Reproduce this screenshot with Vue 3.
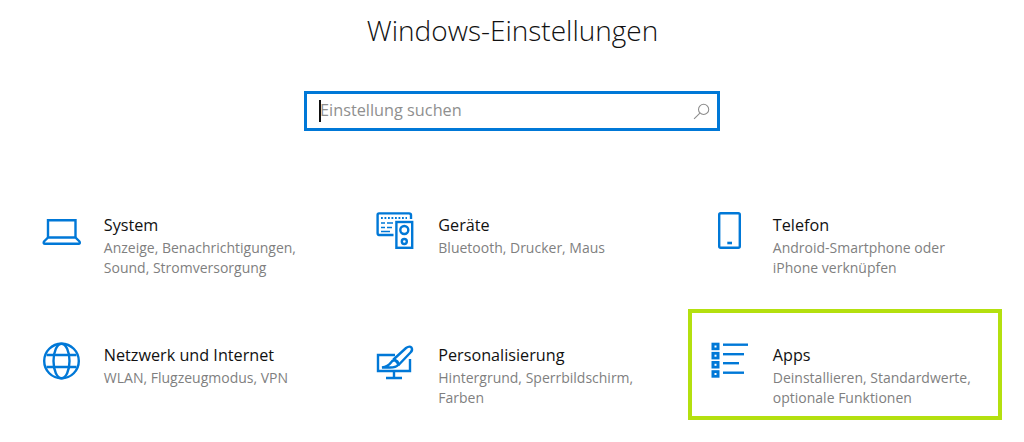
<template>
  <div class="page">
    <h1 class="title">Windows-Einstellungen</h1>
    <div class="search">
      <span class="caret"></span>
      <span class="placeholder">Einstellung suchen</span>
      <svg class="search-icon" viewBox="0 0 16 16" fill="none" stroke="#8c8c8c" stroke-width="1">
        <circle cx="10" cy="6" r="4.8" />
        <path d="M6.5 9.5 L1 15" />
      </svg>
    </div>
    <div class="grid">
      <div v-for="t in tiles" :key="t.name" class="tile" :class="{ selected: t.selected }">
        <div class="icon">
          <svg v-if="t.icon === 'laptop'" width="40" height="40" viewBox="0 0 40 40" fill="none" stroke="#0078d7" stroke-width="2.4">
            <path d="M6 26.5 V9.200 H33.500 V26.5" />
            <path d="M6 26.5 H33.500 L37.500 30.500 Q38.500 32.800 36.500 32.800 H3 Q1 32.800 2 30.500 Z" stroke-linejoin="round" />
          </svg>
          <svg v-else-if="t.icon === 'devices'" width="40" height="40" viewBox="0 0 40 40" fill="none" stroke="#0078d7" stroke-width="2.400">
            <path d="M17.500 24 H3 Q1.600 24 1.600 22 V4 Q1.600 2.400 3 2.400 H33 Q35 2.400 35 4 V8" />
            <path d="M5 7 H31" stroke-dasharray="1.800 1.700" stroke-width="1.800" />
            <path d="M5 12 H9 M11 12 H17 M5 16.500 H9 M11 16.500 H16 M5 20.500 H14" stroke-width="1.600" />
            <rect x="20.400" y="11" width="15.800" height="25.800" />
            <circle cx="28.300" cy="19" r="4" />
            <circle cx="28.300" cy="30.500" r="2.500" />
          </svg>
          <svg v-else-if="t.icon === 'phone'" width="40" height="40" viewBox="0 0 40 40" fill="none" stroke="#0078d7" stroke-width="2.4">
            <rect x="8.200" y="2.200" width="20.600" height="34.600" rx="1.500" />
            <path d="M16.300 32 H21" stroke-width="2.600" />
          </svg>
          <svg v-else-if="t.icon === 'globe'" width="40" height="40" viewBox="0 0 40 40" fill="none" stroke="#0078d7" stroke-width="2.400">
            <circle cx="19.500" cy="20" r="17.300" />
            <ellipse cx="19.500" cy="20" rx="8" ry="17.300" />
            <path d="M4.500 14 H34.500 M4.500 26 H34.500" />
          </svg>
          <svg v-else-if="t.icon === 'paint'" width="40" height="40" viewBox="0 0 40 40" fill="none" stroke="#0078d7" stroke-width="2.400">
            <path d="M19 14 H2 V30 H34 V18" />
            <path d="M18 30 V37 M10 37 H26" />
            <path d="M18 18 L30 7 Q33.500 4.500 35.500 6.500 Q37 9 34.500 11.500 L23 23.500 Z" />
            <path d="M6 26.500 H14 Q20 26.500 22 24 Q23 21 20 19.500 Q16.500 18.500 15 21.500 Q12 25.500 6 26.500 Z" />
          </svg>
          <svg v-else width="40" height="40" viewBox="0 0 40 40">
            <g fill="#0078d7">
              <rect x="0.500" y="1.700" width="8" height="7.500" />
              <rect x="0.500" y="10.900" width="8" height="7.500" />
              <rect x="0.500" y="20" width="8" height="7.500" />
              <rect x="0.500" y="29.200" width="8" height="7.500" />
              <rect x="12" y="2.500" width="25" height="2.400" />
              <rect x="12" y="12" width="21" height="2.400" />
              <rect x="12" y="21" width="16" height="2.400" />
              <rect x="12" y="30.500" width="21" height="2.400" />
            </g>
            <g fill="#fff">
              <rect x="3.500" y="4.500" width="2" height="2" />
              <rect x="3.500" y="13.700" width="2" height="2" />
              <rect x="3.500" y="22.800" width="2" height="2" />
              <rect x="3.500" y="32" width="2" height="2" />
            </g>
          </svg>
        </div>
        <div class="text">
          <div class="name">{{ t.name }}</div>
          <div class="desc">{{ t.desc }}</div>
        </div>
      </div>
    </div>
  </div>
</template>

<script setup>
const tiles = [
  { name: 'System', desc: 'Anzeige, Benachrichtigungen, Sound, Stromversorgung', icon: 'laptop' },
  { name: 'Geräte', desc: 'Bluetooth, Drucker, Maus', icon: 'devices' },
  { name: 'Telefon', desc: 'Android-Smartphone oder iPhone verknüpfen', icon: 'phone' },
  { name: 'Netzwerk und Internet', desc: 'WLAN, Flugzeugmodus, VPN', icon: 'globe' },
  { name: 'Personalisierung', desc: 'Hintergrund, Sperrbildschirm, Farben', icon: 'paint' },
  { name: 'Apps', desc: 'Deinstallieren, Standardwerte, optionale Funktionen', icon: 'apps', selected: true },
]
</script>

<style>
html, body {
  background: #fff;
  overflow: hidden;
}
</style>

<style scoped>
.page {
  height: 442px;
  box-sizing: border-box;
  padding: 10px 0 0 18.800px;
  font-family: "Open Sans", "Noto Sans", sans-serif;
}

.title {
  margin: 0 0 0 -17.800px;
  height: 81px;
  line-height: 41px;
  font-size: 28px;
  font-weight: 300;
  color: #111;
  text-align: center;
}

.search {
  width: 416px;
  height: 40px;
  margin-left: 285.200px;
  box-sizing: border-box;
  border: 3px solid #0078d7;
  display: flex;
  align-items: center;
  padding: 0 7px 0 12px;
}

.caret {
  width: 2px;
  height: 22px;
  background: #111;
  flex: none;
}

.placeholder {
  margin-left: -1px;
  margin-top: -3px;
  font-size: 16.300px;
  color: #8f8f8f;
  flex: 1;
}

.search-icon {
  width: 17px;
  height: 17px;
}

.grid {
  display: grid;
  grid-template-columns: repeat(3, 314px);
  grid-auto-rows: 111px;
  column-gap: 20.5px;
  row-gap: 19px;
  margin-top: 48px;
}

.tile {
  box-sizing: border-box;
  border: 4px solid transparent;
  padding: 28px 0 0 19px;
  display: flex;
}

.tile.selected {
  border-color: #b4e00f;
}

.icon {
  width: 62px;
  flex: none;
}

.text {
  margin-top: 2px;
}

.name {
  font-size: 16.200px;
  line-height: 24px;
  color: #111;
}

.desc {
  margin-top: 1px;
  font-size: 14px;
  line-height: 20px;
  color: #7f7f7f;
  width: 215px;
}
</style>
